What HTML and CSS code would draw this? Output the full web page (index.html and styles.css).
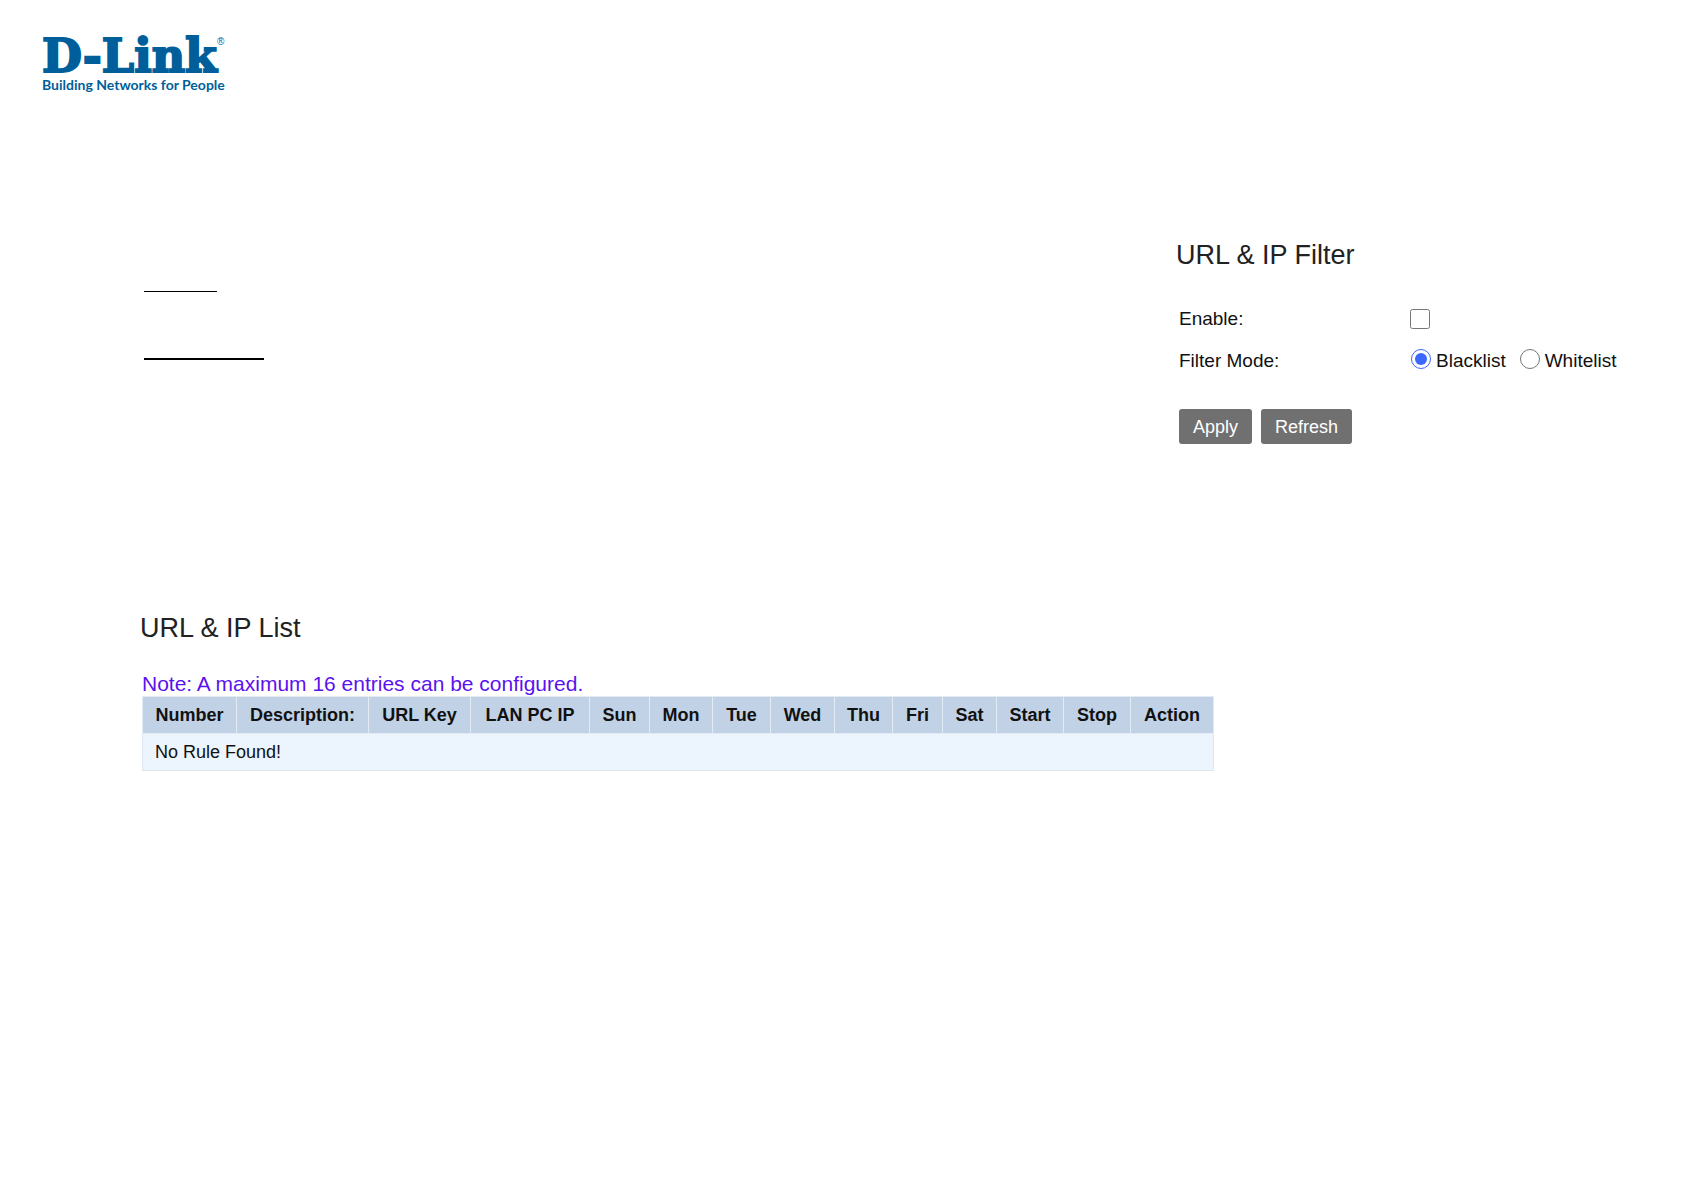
FILE: index.html
```
<!DOCTYPE html>
<html lang="en">
<head>
<meta charset="utf-8">
<title>D-Link URL &amp; IP Filter</title>
<link rel="stylesheet" href="styles.css">
</head>
<body>
<header class="brand">
  <div class="wordmark">D-Link<span class="registered">®</span></div>
  <div class="tagline">Building Networks for People</div>
</header>
<main>
  <div class="top">
    <div class="rules">
      <hr class="rule rule-short">
      <hr class="rule rule-long">
    </div>
    <form class="filter">
      <h2>URL &amp; IP Filter</h2>
      <div class="field">
        <label for="enable">Enable:</label>
        <input type="checkbox" id="enable">
      </div>
      <div class="field" role="radiogroup" aria-labelledby="mode">
        <span id="mode">Filter Mode:</span>
        <div class="options">
          <label class="option"><input type="radio" name="mode" checked>Blacklist</label>
          <label class="option"><input type="radio" name="mode">Whitelist</label>
        </div>
      </div>
      <div class="actions">
        <button type="button">Apply</button>
        <button type="button">Refresh</button>
      </div>
    </form>
  </div>
  <section class="list">
    <h2>URL &amp; IP List</h2>
    <p class="note">Note: A maximum 16 entries can be configured.</p>
    <table>
      <colgroup>
        <col class="c-number"><col class="c-description"><col class="c-key"><col class="c-lan">
        <col class="c-sun"><col class="c-mon"><col class="c-tue"><col class="c-wed"><col class="c-tue"><col class="c-fri"><col class="c-sat">
        <col class="c-time"><col class="c-time"><col class="c-action">
      </colgroup>
      <thead>
        <tr><th>Number</th><th>Description:</th><th>URL Key</th><th>LAN PC IP</th><th>Sun</th><th>Mon</th><th>Tue</th><th>Wed</th><th>Thu</th><th>Fri</th><th>Sat</th><th>Start</th><th>Stop</th><th>Action</th></tr>
      </thead>
      <tbody>
        <tr><td colspan="14">No Rule Found!</td></tr>
      </tbody>
    </table>
  </section>
</main>
</body>
</html>
```
FILE: styles.css
```
* { box-sizing: border-box; }
body {
  margin: 0;
  background: #fff;
  color: #111;
  font-family: "Liberation Sans", Arial, sans-serif;
  font-size: 19px;
  line-height: 24px;
}
h2 { margin: 0; font-size: 27px; line-height: 32px; font-weight: 400; color: #222; }

.brand { padding: 35px 42px 0; color: #005f9b; }
.wordmark {
  display: flex;
  align-items: flex-start;
  font: 700 46px/42px "DejaVu Serif", serif;
  -webkit-text-stroke: 2px #005f9b;
}
.registered {
  font: 10px/14px "Liberation Sans", Arial, sans-serif;
  -webkit-text-stroke: 0;
}
.tagline { font: 700 14px/16px Lato, sans-serif; }

main { padding: 146px 60px 40px 140px; }
.top { display: flex; justify-content: space-between; align-items: flex-start; }
.rules { padding: 52px 0 0 4px; }
.rule { margin: 0; border: 0; background: #000; }
.rule-short { width: 73px; height: 1px; }
.rule-long { width: 120px; height: 2px; margin-top: 66px; }

.filter { width: 448px; }
.filter h2 { margin-bottom: 36px; }
.field {
  display: grid;
  grid-template-columns: 231px 1fr;
  align-items: center;
  padding-left: 3px;
  margin-bottom: 18px;
}
.field input { width: 20px; height: 20px; margin: 0; accent-color: #3b68ff; }
.options { display: flex; gap: 14px; padding-left: 1px; white-space: nowrap; }
.option { display: flex; align-items: center; gap: 5px; }
.option input { margin-bottom: 4px; }
.actions { display: flex; gap: 9px; padding: 18px 0 0 3px; }
button {
  height: 35px;
  padding: 0 14px;
  border: 0;
  border-radius: 3px;
  background: #707070;
  color: #fff;
  font: 18px/24px "Liberation Sans", Arial, sans-serif;
}

.list { margin-top: 168px; }
.note { margin: 28px 0 0 2px; font-size: 21px; line-height: 24px; color: #5b12ee; }
table {
  width: 1072px;
  margin-left: 2px;
  border-collapse: collapse;
  table-layout: fixed;
  font-size: 18px;
  line-height: 24px;
}
th, td { height: 37px; padding: 0; border: 1px solid #dfe6f0; color: #111; }
th { background: #c2d2e6; border-color: #e3ebf5; white-space: nowrap; }
td { background: #ecf4fd; padding-left: 12px; }
.c-number { width: 94px; }
.c-description { width: 132px; }
.c-key { width: 102px; }
.c-lan { width: 119px; }
.c-sun { width: 60px; }
.c-mon { width: 63px; }
.c-tue { width: 58px; }
.c-wed { width: 64px; }
.c-fri { width: 50px; }
.c-sat { width: 54px; }
.c-time { width: 67px; }
.c-action { width: 83px; }
```
